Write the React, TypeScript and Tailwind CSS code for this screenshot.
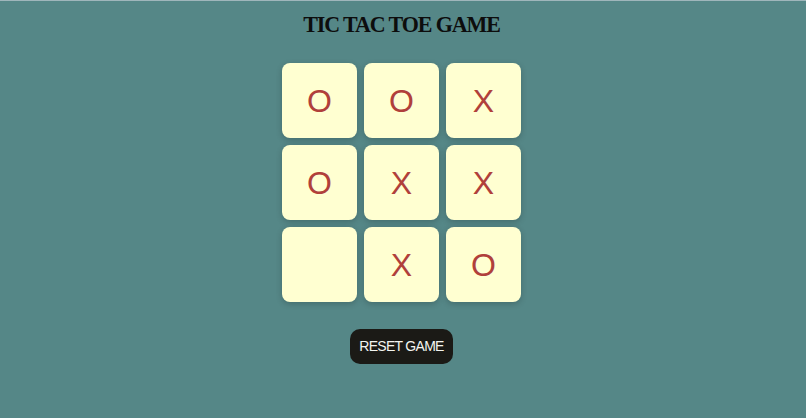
import React from "react";

const board = ["O", "O", "X", "O", "X", "X", "", "X", "O"];

export default function App() {
  return (
    <div className="w-[806px] h-[418px] bg-[#558787] border-t border-[#9fb6bb] pr-[3px] flex flex-col items-center font-['Liberation_Sans',Arial,sans-serif]">
      <h1 className="mt-[9px] text-[22px] leading-[28px] tracking-[-1.1px] font-bold text-[#0d0d0d] font-['Liberation_Serif','Times_New_Roman',serif] scale-y-[1.08]">
        TIC TAC TOE GAME
      </h1>
      <div className="mt-[25px] grid grid-cols-[75px_75px_75px] grid-rows-[75px_75px_75px] gap-[7px]">
        {board.map((v, i) => (
          <div
            key={i}
            className="bg-[#ffffd1] rounded-[8px] shadow-[0_2px_6px_rgba(0,0,0,0.2)] flex items-center justify-center text-[32px] text-[#b0403b]"
          >
            {v}
          </div>
        ))}
      </div>
      <button className="mt-[27px] w-[103px] h-[35px] rounded-[10px] bg-[#1b1a16] text-[#f4f4f0] text-[14px] tracking-[-0.7px] flex items-center justify-center">
        RESET GAME
      </button>
    </div>
  );
}
